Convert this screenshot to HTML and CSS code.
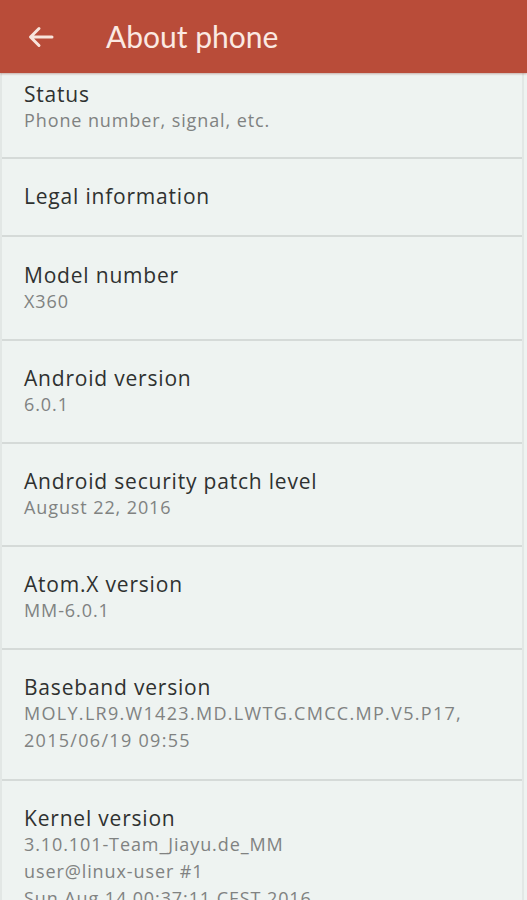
FILE: index.html
```html
<!DOCTYPE html>
<html lang="en">
<head>
    <meta charset="UTF-8">
    <meta name="viewport" content="width=device-width, initial-scale=1.0">
    <title>About phone</title>
    <link rel="stylesheet" href="styles.css">
</head>
<body>
    <div class="toolbar">
        <svg class="back" width="26" height="22" viewBox="0 0 26 22">
            <path d="M24 11H3M11 2.5L2.5 11L11 19.5" fill="none" stroke="#f8e4dc" stroke-width="3" stroke-linecap="round" stroke-linejoin="round"/>
        </svg>
        <h1>About phone</h1>
    </div>

    <div class="list">
        <div class="item first">
            <div class="title">Status</div>
            <div class="summary">Phone number, signal, etc.</div>
        </div>
        <div class="item single">
            <div class="title">Legal information</div>
        </div>
        <div class="item model">
            <div class="title">Model number</div>
            <div class="summary">X360</div>
        </div>
        <div class="item">
            <div class="title">Android version</div>
            <div class="summary">6.0.1</div>
        </div>
        <div class="item">
            <div class="title">Android security patch level</div>
            <div class="summary">August 22, 2016</div>
        </div>
        <div class="item">
            <div class="title">Atom.X version</div>
            <div class="summary">MM-6.0.1</div>
        </div>
        <div class="item baseband">
            <div class="title">Baseband version</div>
            <div class="summary">MOLY.LR9.W1423.MD.LWTG.CMCC.MP.V5.P17,<br>2015/06/19 09:55</div>
        </div>
        <div class="item">
            <div class="title">Kernel version</div>
            <div class="summary">3.10.101-Team_Jiayu.de_MM<br>user@linux-user #1<br>Sun Aug 14 00:37:11 CEST 2016</div>
        </div>
    </div>
</body>
</html>
```

FILE: styles.css
```css
body {
    margin: 0;
    font-family: "Open Sans", Lato, sans-serif;
    background-color: #eef3f1;
    height: 900px;
    overflow: hidden;
}

.toolbar {
    height: 73px;
    background-color: #b94c39;
    display: flex;
    align-items: center;
    padding-left: 28px;
    box-shadow: 0 1px 2px rgba(120, 40, 30, 0.35);
    position: relative;
}

.toolbar h1 {
    margin: 0 0 2px 52px;
    font-family: Lato, sans-serif;
    font-size: 30px;
    font-weight: 400;
    color: #fbe9e2;
}

.list {
    border-left: 2px solid #e2e7e5;
    border-right: 2px solid #e2e7e5;
    margin-right: 3px;
}

.item {
    padding: 24px 22px 24px 22px;
    border-bottom: 2px solid #d5dad8;
}

.item.first {
    padding-top: 8px;
    padding-bottom: 23px;
}

.item.single {
    padding-bottom: 26px;
}

.item.model {
    padding-top: 25px;
}

.item.baseband {
    padding-bottom: 25px;
}

.item.baseband .summary {
    letter-spacing: 1.3px;
}

.title {
    font-size: 21px;
    font-weight: 500;
    line-height: 26px;
    letter-spacing: 0.8px;
    color: #2f3130;
}

.summary {
    font-size: 18px;
    line-height: 27px;
    letter-spacing: 0.9px;
    color: #808281;
}
```
